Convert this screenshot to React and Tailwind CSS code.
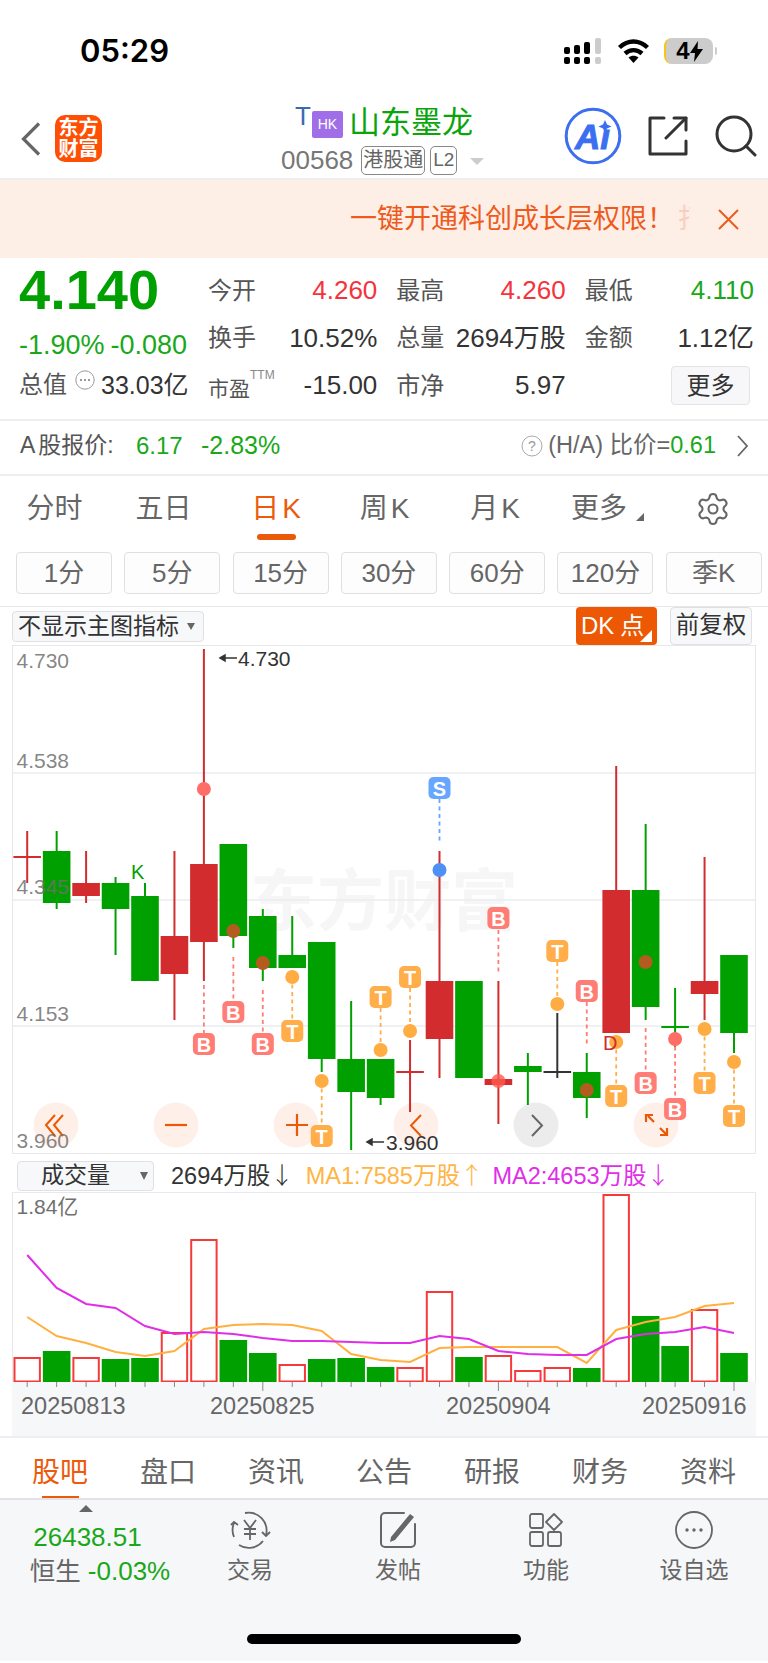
import { Settings } from 'lucide-react'

const RED = '#d22c2e'
const GREEN = '#00a000'

const X = (i) => 27.2 + 29.45 * i

// color, wick top, wick bottom, body top, body bottom
const candles = [
  ['r', 831, 883, 857, 857], ['g', 831, 909, 851, 903], ['r', 851, 903, 883, 896],
  ['g', 877, 955, 883, 909], ['g', 883, 981, 896, 981], ['r', 851, 1020, 936, 974],
  ['r', 649, 981, 864, 942], ['g', 844, 948, 844, 936], ['g', 909, 981, 916, 968],
  ['g', 916, 968, 955, 968], ['g', 942, 1072, 942, 1059], ['g', 1001, 1150, 1059, 1092],
  ['g', 1059, 1105, 1059, 1098], ['r', 1040, 1112, 1072, 1072], ['r', 851, 1078, 981, 1039],
  ['g', 981, 1078, 981, 1078], ['r', 981, 1124, 1079, 1085], ['g', 1053, 1105, 1066, 1072],
  ['k', 1013, 1078, 1072, 1072], ['g', 1053, 1118, 1072, 1098], ['r', 766, 1033, 890, 1033],
  ['g', 824, 1020, 890, 1007], ['g', 988, 1047, 1027, 1027], ['r', 857, 1020, 981, 994],
  ['g', 955, 1053, 955, 1033],
]

// candle index, tag letter, tag y, dot y, dot colour, dash from, dash to
const marks = [
  [6, 'B', 1044, 789, '#ff6d66', 985, 1033], [7, 'B', 1012, 931, '#b25c20', 957, 1000],
  [8, 'B', 1044, 963, '#b25c20', 990, 1033], [9, 'T', 1031, 977, '#ffac42', 977, 1020],
  [10, 'T', 1136, 1081, '#ffac42', 1081, 1125], [12, 'T', 997, 1050, '#ffac42', 1008, 1050],
  [13, 'T', 977, 1031, '#ffac42', 988, 1031], [14, 'S', 788, 870, '#4f90f5', 799, 842],
  [16, 'B', 918, 1081, '#ff5a50', 930, 972], [18, 'T', 951, 1004, '#ffac42', 962, 1004],
  [19, 'B', 991, 1090, '#b25c20', 1002, 1045], [20, 'T', 1096, 1042, '#ffac42', 1042, 1085],
  [21, 'B', 1083, 962, '#b25c20', 1028, 1072], [22, 'B', 1109, 1039, '#ff6d66', 1039, 1098],
  [23, 'T', 1083, 1029, '#ffac42', 1029, 1072], [24, 'T', 1116, 1062, '#ffac42', 1062, 1105],
]
const tagColor = { B: '#ff7d74', T: '#ffae4a', S: '#66a6ff' }

const volumes = [
  ['h', 1357], ['g', 1351], ['h', 1357], ['g', 1359], ['g', 1358], ['h', 1332], ['h', 1239],
  ['g', 1340], ['g', 1353], ['h', 1364], ['g', 1359], ['g', 1358], ['g', 1367], ['h', 1367],
  ['h', 1291], ['g', 1357], ['h', 1355], ['h', 1370], ['h', 1367], ['g', 1368], ['h', 1194],
  ['g', 1316], ['g', 1346], ['h', 1309], ['g', 1353],
]
const ma1 = [1317, 1336, 1343, 1352, 1356, 1351, 1329, 1325, 1324, 1325, 1331, 1354, 1360, 1362, 1348, 1347, 1347, 1347, 1347, 1363, 1330, 1322, 1317, 1306, 1303]
const ma2 = [1255, 1288, 1304, 1308, 1326, 1334, 1332, 1334, 1338, 1341, 1341, 1342, 1343, 1343, 1336, 1339, 1351, 1354, 1355, 1355, 1339, 1334, 1332, 1327, 1333]

function Cell({ label, value, color = 'text-[#333]' }) {
  return (
    <div className="flex items-center justify-between h-[47.5px]">
      <span className="text-[24px] text-[#555]">{label}</span>
      <span className={`text-[26px] ${color}`}>{value}</span>
    </div>
  )
}

function StatusBar() {
  return (
    <div className="h-[102px] flex items-center pl-[80px] pr-[51px]">
      <span className="text-[31px] font-semibold text-black font-['Inter',sans-serif]">05:29</span>
      <svg className="ml-auto" width="38" height="26" viewBox="0 0 38 26">
        <rect x="0" y="19" width="6" height="7" rx="2" />
        <rect x="10" y="19" width="6" height="7" rx="2" />
        <rect x="20" y="19" width="6" height="7" rx="2" />
        <rect x="31" y="19" width="6" height="7" rx="2" fill="#ccc" />
        <rect x="0" y="9" width="6" height="7" rx="2" />
        <rect x="10" y="7" width="6" height="9" rx="2" />
        <rect x="20" y="4" width="6" height="12" rx="2" />
        <rect x="31" y="0" width="6" height="16" rx="2" fill="#ccc" />
      </svg>
      <svg className="ml-[15px]" width="33" height="24" viewBox="0 0 33 24" fill="none" stroke="#000" strokeWidth="4.4">
        <path d="M2.5 8.5C11 0.5 22 0.5 30.5 8.5" />
        <path d="M8 14.5C13 10 20 10 25 14.5" />
        <path d="M16.5 24L11.5 18.5C14.5 16 18.5 16 21.5 18.5Z" fill="#000" stroke="none" />
      </svg>
      <div className="ml-[14px] w-[49px] h-[26px] rounded-[8px] bg-[#ccc] border-l-[2px] border-[#f5c518] flex items-center justify-center">
        <span className="text-[24px] font-bold text-black leading-none">4</span>
        <svg width="13" height="21" viewBox="0 0 13 21"><path d="M8 0L0 12h5l-1 9 9-13H7.5z" /></svg>
      </div>
      <div className="ml-[2px] w-[2px] h-[8px] rounded-r bg-[#ccc]" />
    </div>
  )
}

function NavBar() {
  return (
    <div className="h-[76px] flex">
      <div className="w-[281px] flex items-center pl-[21px] pb-[3px]">
        <svg width="20" height="34" viewBox="0 0 20 34" fill="none" stroke="#666" strokeWidth="3.2">
          <path d="M18 1.5L2.5 17 18 32.5" />
        </svg>
        <div className="ml-[14px] w-[47px] h-[47px] rounded-[10px] bg-[#ff4f04] text-white text-[20px] font-bold leading-[21px] flex flex-col items-center justify-center">
          <span>东方</span>
          <span>财富</span>
        </div>
      </div>
      <div className="w-[210px]">
        <div className="h-[38px] mt-[1px] pl-[14px] flex items-center">
          <span className="text-[26px] leading-none text-[#3b6ab0] mb-[12px]">T</span>
          <span className="ml-[1px] w-[31px] h-[27px] mt-[4px] bg-[#a06fe8] rounded-[2px] text-white text-[14px] flex items-center justify-center">HK</span>
          <span className="ml-[6px] text-[31px] leading-none text-[#0aa50a]">山东墨龙</span>
        </div>
        <div className="h-[32px] mt-[3px] flex items-center">
          <span className="text-[26px] text-[#777]">00568</span>
          <span className="ml-[8px] w-[64px] h-[29px] rounded-[5px] border border-[#888] text-[20px] text-[#666] flex items-center justify-center">港股通</span>
          <span className="ml-[5px] w-[27px] h-[29px] rounded-[5px] border border-[#888] text-[19px] text-[#666] flex items-center justify-center">L2</span>
          <span className="ml-[13px] mt-[2px] w-0 h-0 border-l-[7px] border-r-[7px] border-t-[7px] border-l-transparent border-r-transparent border-t-[#ccc]" />
        </div>
      </div>
      <div className="ml-auto flex items-center pr-[11px] pb-[8px]">
        <svg width="58" height="58" viewBox="0 0 58 58">
          <circle cx="29" cy="29" r="26.8" fill="none" stroke="#3b6ff0" strokeWidth="3" />
          <text x="11" y="42" fontSize="35" fontWeight="700" fontStyle="italic" fill="#3b6ff0" stroke="#3b6ff0" strokeWidth="1">Aı</text>
          <path d="M41 13l2 4.5 4.5 2-4.5 2-2 4.5-2-4.5-4.5-2 4.5-2z" fill="#3b6ff0" />
        </svg>
        <svg className="ml-[26px]" width="40" height="40" viewBox="0 0 40 40" fill="none" stroke="#333" strokeWidth="3" strokeLinecap="round" strokeLinejoin="round">
          <path d="M16 2H2v36h36V25" />
          <path d="M18 22L38 2" />
          <path d="M26 2h12v12" />
        </svg>
        <svg className="ml-[27px]" width="42" height="42" viewBox="0 0 42 42" fill="none" stroke="#333" strokeWidth="3" strokeLinecap="round">
          <circle cx="19" cy="19" r="17" />
          <path d="M31 31l9 9" />
        </svg>
      </div>
    </div>
  )
}

function Quote() {
  return (
    <div className="h-[161px] flex border-b-[2px] border-[#eee] box-content">
      <div className="w-[208px] pl-[19px]">
        <div className="h-[60px] pt-[5px] flex items-end text-[56px] font-bold leading-none text-[#00a000]">4.140</div>
        <div className="mt-[11px] flex gap-[6px] text-[27px] leading-[32px] text-[#1aa81a]">
          <span>-1.90%</span>
          <span>-0.080</span>
        </div>
        <div className="mt-[8px] flex items-center leading-[32px]">
          <span className="text-[24px] text-[#555]">总值</span>
          <svg className="ml-[8px] mb-[10px]" width="20" height="20" viewBox="0 0 20 20" fill="#777">
            <circle cx="10" cy="10" r="9.2" fill="none" stroke="#999" />
            <circle cx="6" cy="10" r="1" />
            <circle cx="10" cy="10" r="1" />
            <circle cx="14" cy="10" r="1" />
          </svg>
          <span className="ml-[6px] text-[25px] text-[#333]">33.03亿</span>
        </div>
      </div>
      <div className="w-[546px] pt-[9px] grid grid-cols-3 gap-x-[19px] content-start">
        <Cell label="今开" value="4.260" color="text-[#f4333c]" />
        <Cell label="最高" value="4.260" color="text-[#f4333c]" />
        <Cell label="最低" value="4.110" color="text-[#1aa81a]" />
        <Cell label="换手" value="10.52%" />
        <Cell label="总量" value="2694万股" />
        <Cell label="金额" value="1.12亿" />
        <div className="flex items-center justify-between h-[47.5px]">
          <span className="flex items-start">
            <span className="text-[21px] text-[#555] mt-[6px]">市盈</span>
            <span className="text-[12px] text-[#888] leading-none mt-[2px]">TTM</span>
          </span>
          <span className="text-[26px] text-[#333]">-15.00</span>
        </div>
        <Cell label="市净" value="5.97" />
        <div className="flex items-center justify-end h-[47.5px] pr-[4px]">
          <div className="w-[79px] h-[39px] rounded-[4px] bg-[#f7f7f9] border border-[#e4e4e6] text-[24px] text-[#333] flex items-center justify-center">更多</div>
        </div>
      </div>
    </div>
  )
}

function ARow() {
  return (
    <div className="h-[49px] flex items-center pl-[20px] pr-[20px] pb-[4px] border-b-[2px] border-[#eee] box-content">
      <span className="w-[116px] text-[23px] text-[#555]">A<span className="ml-[3px]">股报价:</span></span>
      <span className="w-[65px] text-[24px] text-[#1aa81a]">6.17</span>
      <span className="text-[25px] text-[#1aa81a]">-2.83%</span>
      <svg className="ml-auto" width="22" height="22" viewBox="0 0 22 22">
        <circle cx="11" cy="11" r="10" fill="none" stroke="#aaa" />
        <text x="11" y="16" textAnchor="middle" fontSize="14" fill="#999">?</text>
      </svg>
      <span className="ml-[5px] text-[23.5px] text-[#666]">(H/A) 比价=</span>
      <span className="text-[23.5px] text-[#1aa81a]">0.61</span>
      <svg className="ml-[21px]" width="11" height="22" viewBox="0 0 11 22" fill="none" stroke="#666" strokeWidth="1.8">
        <path d="M1 1l9 10-9 10" />
      </svg>
    </div>
  )
}

function PeriodTabs() {
  return (
    <div className="h-[76px] pb-[10px] grid grid-cols-[109px_109px_116px_101px_120px_105px_1fr] items-center text-[28px] text-[#666]">
      <span className="text-center">分时</span>
      <span className="text-center">五日</span>
      <span className="flex flex-col items-center relative text-[#ec5a0c]">
        <span>日<span className="ml-[3px]">K</span></span>
        <span className="absolute top-[46px] w-[39px] h-[6px] rounded-full bg-[#eb5a09]" />
      </span>
      <span className="text-center">周<span className="ml-[3px]">K</span></span>
      <span className="text-center">月<span className="ml-[3px]">K</span></span>
      <span className="flex items-center justify-center">
        更多
        <svg className="ml-[9px] mt-[15px]" width="8" height="8" viewBox="0 0 8 8"><path d="M8 0v8H0z" fill="#666" /></svg>
      </span>
      <span className="flex justify-end pr-[37px]">
        <Settings size={36} strokeWidth={1.4} color="#666" />
      </span>
    </div>
  )
}

function Intervals() {
  return (
    <div className="h-[54px] pl-[16px] flex gap-[12.3px] border-b border-[#e8e8ea] box-content">
      {['1分', '5分', '15分', '30分', '60分', '120分', '季K'].map((t) => (
        <div key={t} className="w-[96px] h-[42px] rounded-[4px] bg-[#fdfdfd] border border-[#e0e0e2] text-[26px] text-[#666] flex items-center justify-center">{t}</div>
      ))}
    </div>
  )
}

function ChartToolbar() {
  return (
    <div className="h-[38px] pl-[12px] flex items-start">
      <div className="mt-[4px] w-[192px] h-[31px] rounded-[4px] bg-[#f7f8fa] border border-[#e0e0e4] flex items-center pl-[5px] text-[23px] text-[#333]">
        不显示主图指标
        <span className="ml-[8px] w-0 h-0 border-l-[4px] border-r-[4px] border-t-[7px] border-l-transparent border-r-transparent border-t-[#666]" />
      </div>
      <div className="ml-auto w-[81px] h-[38px] rounded-[4px] bg-[#ec5804] text-white text-[24px] pl-[5px] flex items-center relative">
        DK<span className="ml-[6px]">点</span>
        <svg className="absolute right-[5px] bottom-[3px]" width="12" height="12" viewBox="0 0 12 12"><path d="M12 0v12H0z" fill="#fff" /></svg>
      </div>
      <div className="ml-[13px] mr-[16px] w-[82px] h-[38px] rounded-[4px] bg-[#f7f8fa] border border-[#e0e0e4] text-[23.5px] text-[#333] flex items-center justify-center">前复权</div>
    </div>
  )
}

function KChart() {
  const axis = [[660, '4.730'], [760, '4.538'], [886, '4.345'], [1013, '4.153'], [1140, '3.960']]
  const roundBtn = [56, 176, 296, 416, 536, 656]
  return (
    <div className="ml-[12px] w-[744px] h-[509px] border border-[#e8e8ec]">
      <svg className="block" width="742" height="507" viewBox="13 646 742 507">
        <text x="250" y="925" fontSize="67" fontWeight="700" fill="#f6f6f6">东方财富</text>
        {[773, 900, 1026].map((y) => (
          <line key={y} x1="12" x2="756" y1={y} y2={y} stroke="#ebedf2" strokeWidth="1.6" />
        ))}
        {roundBtn.map((x, i) => (
          <circle key={x} cx={x} cy="1125" r="22.5" fill={i === 4 ? '#ececec' : '#feefe8'} />
        ))}
        <g fill="none" stroke="#ec5804" strokeWidth="2">
          <path d="M55 1115l-9 10 9 11M63 1115l-9 10 9 11" />
          <path d="M165 1125h22" strokeWidth="2.2" />
          <path d="M286 1125h22M297 1114v22" strokeWidth="2.2" />
          <path d="M421 1115l-10 10.500 10 10.500" />
          <path d="M648 1116l6 6M646 1122v-7h7M667 1135l-7-7M667 1128v7h-7" strokeWidth="2.2" />
        </g>
        <path d="M532 1115l10 10.500-10 10.500" fill="none" stroke="#666" strokeWidth="2" />
        {candles.map(([c, top, bot, a, b], i) => {
          const col = c === 'r' ? RED : c === 'g' ? GREEN : '#333'
          return (
            <g key={i}>
              <line x1={X(i)} x2={X(i)} y1={top} y2={bot} stroke={col} strokeWidth="2" />
              {a === b
                ? <line x1={X(i) - 13.8} x2={X(i) + 13.8} y1={a} y2={a} stroke={col} strokeWidth="2" />
                : <rect x={X(i) - 13.8} y={a} width="27.6" height={b - a} fill={col} />}
            </g>
          )
        })}
        {axis.map(([y, t]) => (
          <text key={t} x="16.5" y={y} dominantBaseline="central" fontSize="21" fill="#707070" fillOpacity="0.85">{t}</text>
        ))}
        {marks.map(([i, t, ty, dy, dc, d1, d2]) => (
          <g key={i}>
            <line x1={X(i)} x2={X(i)} y1={d1} y2={d2} stroke={tagColor[t]} strokeWidth="1.8" strokeDasharray="4 3.5" />
            <rect x={X(i) - 11} y={ty - 11} width="22" height="22" rx="5" fill={tagColor[t]} />
            <text x={X(i)} y={ty + 7.5} textAnchor="middle" fontSize="20" fontWeight="700" fill="#fff">{t}</text>
            <circle cx={X(i)} cy={dy} r="7" fill={dc} fillOpacity={dc === '#ff5a50' ? 0.8 : 1} />
          </g>
        ))}
        <text x="131" y="872" dominantBaseline="central" fontSize="20" fill={GREEN}>K</text>
        <text x="603" y="1043" dominantBaseline="central" fontSize="20" fill={RED}>D</text>
        <path d="M220 658h17M220 658l5-3v6z" fill="#333" stroke="#333" strokeWidth="1.5" />
        <text x="238" y="658" dominantBaseline="central" fontSize="21" fill="#333">4.730</text>
        <path d="M367 1142h17M367 1142l5-3v6z" fill="#333" stroke="#333" strokeWidth="1.5" />
        <text x="386" y="1142" dominantBaseline="central" fontSize="21" fill="#333">3.960</text>
      </svg>
    </div>
  )
}

function VolumeToolbar() {
  const arrow = "font-['Noto_Sans_CJK_SC',sans-serif] font-light"
  return (
    <div className="h-[38px] pl-[17px] pt-[5px] flex items-center text-[23.5px]">
      <div className="w-[137px] h-[30px] rounded-[4px] bg-[#f7f8fa] border border-[#e0e0e4] flex items-center pl-[23px] text-[23px] text-[#333]">
        成交量
        <span className="ml-[30px] w-0 h-0 border-l-[4.5px] border-r-[4.5px] border-t-[8px] border-l-transparent border-r-transparent border-t-[#666]" />
      </div>
      <span className="ml-[17px] text-[#333]">2694万股<span className={arrow}>↓</span></span>
      <span className="ml-[12px] text-[#ffb444]">MA1:7585万股<span className={arrow}>↑</span></span>
      <span className="ml-[9px] text-[#e02ee8]">MA2:4653万股<span className={arrow}>↓</span></span>
    </div>
  )
}

function VolumeChart() {
  const line = (arr) => arr.map((y, i) => `${X(i)},${y}`).join(' ')
  const major = [8, 16, 24]
  return (
    <div className="ml-[12px] w-[744px]">
      <div className="h-[190px] border border-b-0 border-[#e8e8ec]">
        <svg className="block" width="742" height="189" viewBox="13 1193 742 189">
          <text x="16.5" y="1206" dominantBaseline="central" fontSize="21" fill="#707070">1.84亿</text>
          {volumes.map(([t, top], i) => (
            t === 'g'
              ? <rect key={i} x={X(i) - 13.8} y={top} width="27.6" height={1382 - top} fill={GREEN} />
              : <rect key={i} x={X(i) - 12.7} y={top + 1} width="25.4" height={1380.5 - top} fill="#fff" stroke="#f53a3a" strokeWidth="2" />
          ))}
          <polyline points={line(ma1)} fill="none" stroke="#ffb040" strokeWidth="2" />
          <polyline points={line(ma2)} fill="none" stroke="#e02ee8" strokeWidth="2" />
        </svg>
      </div>
      <div className="h-[54px] bg-[#f6f7f9]">
        <svg className="block" width="744" height="54" viewBox="12 1382 744 54">
          {volumes.map((_, i) => (
            <line key={i} x1={X(i)} x2={X(i)} y1="1382" y2={major.includes(i) ? 1391 : 1387} stroke="#888" strokeWidth="1" />
          ))}
          {[[21, '20250813'], [210, '20250825'], [446, '20250904'], [642, '20250916']].map(([x, t]) => (
            <text key={t} x={x} y="1406" dominantBaseline="central" fontSize="23.5" fill="#666">{t}</text>
          ))}
        </svg>
      </div>
    </div>
  )
}

function BottomTabs() {
  return (
    <div className="h-[50px] pt-[10px] border-t-[2px] border-[#eeeef2] box-content pl-[6px] grid grid-cols-[repeat(7,108px)] items-center text-[28px] text-[#666] relative">
      {['股吧', '盘口', '资讯', '公告', '研报', '财务', '资料'].map((t, i) => (
        <span key={t} className={`text-center ${i === 0 ? 'text-[#ec5a0c]' : ''}`}>{t}</span>
      ))}
      <span className="absolute left-[42px] bottom-0 w-[37px] h-[2px] bg-[#eb5a09]" />
    </div>
  )
}

function BarItem({ label, children }) {
  return (
    <div className="w-[148px] pt-[12px] flex flex-col items-center">
      <div className="h-[36px] flex items-center justify-center">{children}</div>
      <span className="mt-[7px] text-[23px] leading-[30px] text-[#666]">{label}</span>
    </div>
  )
}

function BottomBar() {
  return (
    <div className="h-[163px] border-t-[2px] border-[#e2e2e6] bg-[#f6f7f9] box-border">
      <div className="h-[134px] flex">
        <div className="w-[176px] pt-[5px] flex flex-col items-center">
          <span className="w-0 h-0 border-l-[7px] border-r-[7px] border-b-[7px] border-l-transparent border-r-transparent border-b-[#666] -ml-[4px]" />
          <span className="mt-[9px] -ml-[1px] text-[26px] leading-[32px] text-[#1aa81a]">26438.51</span>
          <span className="pl-[24px] text-[25.5px] leading-[36px] text-[#666] whitespace-nowrap">恒生 <span className="text-[26px] text-[#1aa81a]">-0.03%</span></span>
        </div>
        <BarItem label="交易">
          <svg width="42" height="38" viewBox="0 0 42 38" fill="none" stroke="#666" strokeWidth="1.8">
            <path d="M16 2a18 18 0 0 1 21 22" />
            <path d="M34 30a18 18 0 0 1-24 4M5 26a18 18 0 0 1 0-14" />
            <path d="M33 21l4 4 4-4M2 14l3-3 4 3" />
            <path d="M15 9l6 8 6-8M21 17v12M15 18h12M15 23h12" />
          </svg>
        </BarItem>
        <BarItem label="发帖">
          <svg width="36" height="36" viewBox="0 0 36 36" fill="none" stroke="#666" strokeWidth="2">
            <path d="M24 1H5a4 4 0 0 0-4 4v26a4 4 0 0 0 4 4h26a4 4 0 0 0 4-4V12" strokeLinecap="round" />
            <path d="M11 25L30 2l4 3-19 23-5 2z" fill="#666" stroke="none" />
          </svg>
        </BarItem>
        <BarItem label="功能">
          <svg width="34" height="34" viewBox="0 0 34 34" fill="none" stroke="#666" strokeWidth="1.8">
            <rect x="1" y="1" width="13" height="14" rx="2" />
            <path d="M25 1l8 8-8 8-8-8z" strokeLinejoin="round" />
            <rect x="1" y="19" width="13" height="14" rx="2" />
            <rect x="19" y="19" width="13" height="14" rx="2" />
          </svg>
        </BarItem>
        <BarItem label="设自选">
          <svg width="38" height="38" viewBox="0 0 38 38" fill="#666">
            <circle cx="19" cy="19" r="18" fill="none" stroke="#666" strokeWidth="1.8" />
            <circle cx="12" cy="19" r="1.7" />
            <circle cx="19" cy="19" r="1.7" />
            <circle cx="26" cy="19" r="1.7" />
          </svg>
        </BarItem>
      </div>
      <div className="w-[274px] h-[10px] rounded-full bg-black ml-[247px]" />
    </div>
  )
}

export default function App() {
  return (
    <div className="w-[768px] h-[1663px] bg-white overflow-hidden font-['Liberation_Sans','Noto_Sans_CJK_SC',sans-serif]">
      <StatusBar />
      <NavBar />
      <div className="h-[80px] border-t-[2px] border-[#eeeeee] bg-[#fdeee6] flex items-center justify-end pr-[29px] text-[27px] text-[#ee5a1c]">
        <span>一键开通科创成长层权限！</span>
        <span className="w-[12px] ml-[4px] overflow-hidden opacity-20 whitespace-nowrap">打</span>
        <svg className="ml-[28px]" width="21" height="21" viewBox="0 0 21 21" fill="none" stroke="#ee5a1c" strokeWidth="2">
          <path d="M1 1l19 19M20 1L1 20" />
        </svg>
      </div>
      <Quote />
      <ARow />
      <PeriodTabs />
      <Intervals />
      <ChartToolbar />
      <KChart />
      <VolumeToolbar />
      <VolumeChart />
      <BottomTabs />
      <BottomBar />
    </div>
  )
}
